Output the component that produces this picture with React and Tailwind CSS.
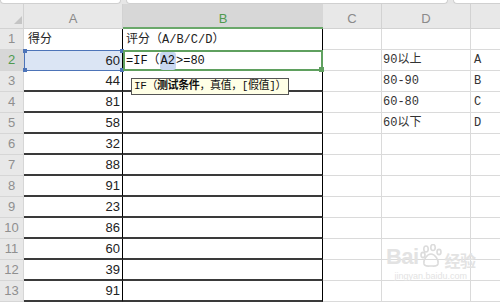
import React from "react";

const nums = [null, 60, 44, 81, 58, 32, 88, 91, 23, 86, 60, 39, 91];
const dVals = ["", "90以上", "80-90", "60-80", "60以下"];
const eVals = ["", "A", "B", "C", "D"];

const mono = { fontFamily: '"Liberation Mono", "Noto Sans CJK SC", monospace' };

function Corner({ cls }) {
  return <div className={`absolute w-[4px] h-[4px] bg-[#4d74b8] ${cls}`} />;
}

export default function App() {
  return (
    <div className="relative w-[500px] h-[302px] overflow-hidden bg-white" style={{ fontFamily: '"Liberation Sans", "Noto Sans CJK SC", sans-serif' }}>
      {/* top strip */}
      <div className="flex h-[4px] bg-[#e6e6e6] gap-[5px]">
        <div className="w-[121px] bg-white rounded-b-[4px] border-b border-x border-[#d0d0d0]" />
        <div className="w-[322px] bg-white rounded-b-[4px] border-b border-x border-[#d0d0d0]" />
        <div className="flex-1 bg-white rounded-bl-[4px] border-b border-l border-[#d0d0d0]" />
      </div>
      <div className="grid grid-cols-[24px_99px_200px_59px_89px_1fr]">
        {/* header row */}
        <div className="relative h-[25px] bg-[#e8e8e8] border-b border-r border-[#d2d2d2]">
          <svg className="absolute left-[14px] top-[12px]" width="8" height="8" viewBox="0 0 8 8"><polygon points="8,0 8,8 0,8" fill="#c4c4c4" /></svg>
        </div>
        <div className="h-[25px] bg-[#e8e8e8] border-b border-r border-[#d2d2d2] flex items-center justify-center pt-[6px] text-[13px] text-[#8a8a8a]">A</div>
        <div className="h-[25px] bg-[#d7d7d7] border-b-2 border-[#6aa86a] flex items-center justify-center pt-[6px] text-[13px] text-[#4f9a4f]">B</div>
        <div className="h-[25px] bg-[#e8e8e8] border-b border-r border-[#d2d2d2] flex items-center justify-center pt-[6px] text-[13px] text-[#8a8a8a]">C</div>
        <div className="h-[25px] bg-[#e8e8e8] border-b border-r border-[#d2d2d2] flex items-center justify-center pt-[6px] text-[13px] text-[#8a8a8a]">D</div>
        <div className="h-[25px] bg-[#e8e8e8] border-b border-[#d2d2d2]" />

        {nums.map((n, i) => {
          const r = i + 1;
          const sel = r === 2;
          return (
            <React.Fragment key={r}>
              <div className={`h-[21px] border-b border-r border-[#d6d6d6] flex items-center justify-center text-[13px] ${sel ? "bg-[#d7d7d7] text-[#4f9a4f]" : "bg-[#e8e8e8] text-[#8f8f8f]"}`}>{r}</div>
              {r === 1 ? (
                <div className="h-[21px] border-r border-black flex items-center pl-[4px] text-[12px] text-[#222]" style={mono}>得分</div>
              ) : sel ? (
                <div className="relative h-[21px] bg-[#dbe5f4] border border-[#4d74b8] border-r-black flex items-center justify-end pr-[2px] text-[13px] text-[#222]">
                  60
                  <Corner cls="-left-[2px] -top-[2px]" />
                  <Corner cls="-left-[2px] -bottom-[2px]" />
                  <Corner cls="-right-[2px] -top-[2px]" />
                  <Corner cls="-right-[2px] -bottom-[2px]" />
                </div>
              ) : (
                <div className="h-[21px] border-b-2 border-b-[#3a3a3a] border-r border-r-black flex items-center justify-end pr-[2px] text-[13px] text-[#222]">{n}</div>
              )}
              {r === 1 ? (
                <div className="h-[21px] border-r border-black flex items-center pl-[3px] text-[12px] text-[#222]" style={mono}>评分（A/B/C/D）</div>
              ) : sel ? (
                <div className="relative h-[21px] border-2 border-[#5fa05f] flex items-center pl-[1px] text-[12px] text-[#111]" style={mono}>
                  <span>=IF（</span><span className="bg-[#c8d7f0] rounded-[3px] px-[1px]">A2</span><span>&gt;=80</span>
                  <div className="absolute -right-[3px] -bottom-[3px] w-[5px] h-[5px] bg-[#5fa05f]" />
                </div>
              ) : (
                <div className="h-[21px] border-b-2 border-b-[#3a3a3a] border-r border-r-black" />
              )}
              <div className="h-[21px] border-b border-r border-[#dadada]" />
              <div className="h-[21px] border-b border-r border-[#dadada] flex items-center pl-[1px] text-[12px] text-[#333]" style={mono}>{dVals[i] || ""}</div>
              <div className="h-[21px] border-b border-[#dadada] flex items-center pl-[3px] text-[12px] text-[#333]" style={mono}>{eVals[i] || ""}</div>
            </React.Fragment>
          );
        })}
      </div>

      {/* tooltip */}
      <div className="absolute left-[131px] top-[78px] h-[17px] px-[2px] flex items-center bg-[#ffffe6] border border-[#555] text-[11px] text-[#111] whitespace-nowrap tracking-[-0.4px]" style={mono}>
        IF（<b>测试条件</b>，真值，[假值]）
      </div>

      {/* watermark */}
      <div className="absolute left-[386px] top-[244px] flex flex-col items-center text-[#e3e3e3] pointer-events-none">
        <div className="flex items-end text-[22px] font-bold leading-none tracking-tight" style={{ fontFamily: '"Liberation Sans", sans-serif' }}>
          <span>Bai</span>
          <svg width="22" height="24" viewBox="0 0 22 24" className="mx-[1px]">
            <g fill="none" stroke="#dcdcdc" strokeWidth="1.6">
              <ellipse cx="6" cy="5" rx="2.2" ry="3" />
              <ellipse cx="13" cy="3.5" rx="2.2" ry="3" />
              <ellipse cx="19" cy="8" rx="2" ry="2.6" />
              <ellipse cx="3" cy="11" rx="2" ry="2.6" />
              <path d="M11 10c-4 0-8 6-7 10 1 3 5 2 7 2s6 1 7-2c1-4-3-10-7-10z" />
            </g>
          </svg>
          <span className="text-[16px] ml-[2px]" style={{ fontFamily: '"Noto Sans CJK SC", sans-serif' }}>经验</span>
        </div>
        <div className="text-[9px] leading-none mt-[4px]">jingyan.baidu.com</div>
      </div>
    </div>
  );
}
